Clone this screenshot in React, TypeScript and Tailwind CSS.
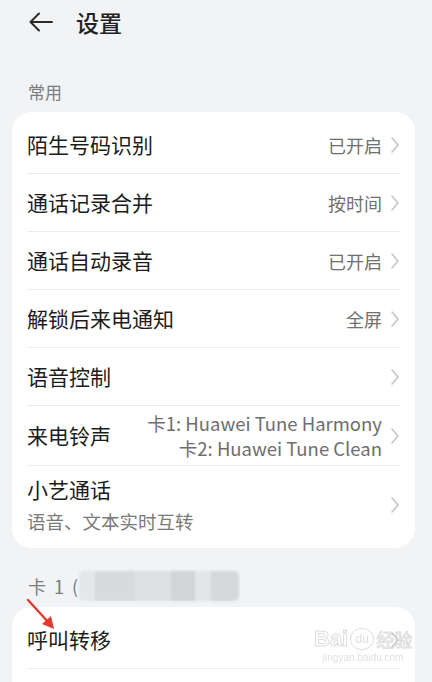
import React from "react";

const Chevron = () => (
  <svg width="10" height="18" viewBox="0 0 10 18" className="shrink-0">
    <path d="M2 2 L8 9 L2 16" fill="none" stroke="#c4c6c8" strokeWidth="1.6" strokeLinecap="round" strokeLinejoin="round" />
  </svg>
);

type Row = { title: string; value?: string; lines?: string[]; sub?: string };

const rows: Row[] = [
  { title: "陌生号码识别", value: "已开启" },
  { title: "通话记录合并", value: "按时间" },
  { title: "通话自动录音", value: "已开启" },
  { title: "解锁后来电通知", value: "全屏" },
  { title: "语音控制" },
  { title: "来电铃声", lines: ["卡1: Huawei Tune Harmony", "卡2: Huawei Tune Clean"] },
  { title: "小艺通话", sub: "语音、文本实时互转" },
];

export default function App() {
  return (
    <div
      className="w-[432px] h-[682px] overflow-hidden bg-[#f1f3f5] relative"
      style={{ fontFamily: '"Noto Sans CJK SC", "Noto Sans", sans-serif' }}
    >
      {/* Header */}
      <div className="h-[44px] flex items-center pl-[28px]">
        <svg width="26" height="22" viewBox="0 0 26 22">
          <path d="M24 11 H3 M11 2.5 L2.5 11 L11 19.5" fill="none" stroke="#2a2a2a" strokeWidth="2" strokeLinecap="round" strokeLinejoin="round" />
        </svg>
        <span className="ml-[22px] text-[23px] font-medium text-[#222] leading-none">设置</span>
      </div>

      {/* Section label */}
      <div className="h-[68px] flex items-end pb-[12px] pl-[28px]">
        <span className="text-[17px] text-[#7a7c7e] leading-none">常用</span>
      </div>

      {/* Card */}
      <div className="mx-[12px] w-[403px] bg-white rounded-[20px] py-[4px]">
        {rows.map((r, i) => {
          const last = i === rows.length - 1;
          const h = r.lines ? "h-[60px]" : r.sub ? "h-[78px]" : "h-[58px]";
          return (
            <div key={i} className={`${h} ml-[15px] mr-[15px] flex items-center ${last ? "" : "border-b border-[#ebebeb]"}`}>
              <div className="flex-1 flex flex-col justify-center">
                <span className="text-[21px] text-[#1c1c1c] leading-none">{r.title}</span>
                {r.sub && <span className="mt-[12px] text-[18.5px] text-[#7a7a7a] leading-none">{r.sub}</span>}
              </div>
              {r.value && <span className="text-[18px] text-[#707070] leading-none mr-[8px]">{r.value}</span>}
              {r.lines && (
                <div className="flex flex-col items-end mr-[8px] gap-[7px]">
                  {r.lines.map((l) => (
                    <span key={l} className="text-[18.5px] text-[#6e6e6e] leading-none">{l}</span>
                  ))}
                </div>
              )}
              {!r.value && !r.lines && <span className="mr-[8px]" />}
              <Chevron />
            </div>
          );
        })}
      </div>

      {/* Section 2 label */}
      <div className="h-[59px] flex items-center pl-[28px] pt-[16px]">
        <span className="text-[18px] text-[#7a7c7e] leading-none whitespace-pre tracking-[2px]">卡 1 (</span>
        <div className="ml-[-1px] w-[160px] h-[30px] rounded-[6px] bg-[#dcdee0] flex overflow-hidden blur-[1px]">
          <div className="w-[16px] bg-[#e6e7e8]" />
          <div className="w-[40px] bg-[#d8dadc]" />
          <div className="w-[36px] bg-[#dfe0e2]" />
          <div className="w-[24px] bg-[#d2d4d6]" />
          <div className="w-[16px] bg-[#e4e5e6]" />
          <div className="flex-1 bg-[#d6d8da]" />
        </div>
      </div>

      {/* Card 2 */}
      <div className="mx-[12px] w-[403px] bg-white rounded-t-[20px] pt-[4px]">
        <div className="h-[58px] mx-[15px] flex items-center border-b border-[#ebebeb]">
          <span className="flex-1 text-[21px] text-[#1c1c1c] leading-none">呼叫转移</span>
          <Chevron />
        </div>
        <div className="h-[30px]" />
      </div>

      {/* Red annotation arrow */}
      <svg className="absolute left-[24px] top-[595px]" width="36" height="38" viewBox="0 0 36 38">
        <path d="M4 5 L25 28" stroke="#e33a2f" strokeWidth="2.4" strokeLinecap="round" />
        <path d="M30 34 L18 29 L27 21 Z" fill="#e33a2f" />
      </svg>

      {/* Baidu watermark */}
      <div className="absolute left-[314px] top-[628px] flex flex-col items-center opacity-70 pointer-events-none">
        <div className="flex items-center leading-none">
          <span className="text-[22px] font-bold text-white" style={{ fontFamily: '"Liberation Sans", sans-serif', WebkitTextStroke: "1px #d0d0d0" }}>Bai</span>
          <span className="mx-[2px] w-[24px] h-[22px] rounded-full border border-[#d0d0d0] text-[12px] text-[#d0d0d0] flex items-center justify-center" style={{ fontFamily: '"Liberation Sans", sans-serif' }}>du</span>
          <span className="text-[18px] text-white" style={{ WebkitTextStroke: "1px #d0d0d0" }}>经验</span>
        </div>
        <span className="text-[10px] text-[#d4d4d4] leading-none mt-[3px]" style={{ fontFamily: '"Liberation Sans", sans-serif' }}>jingyan.baidu.com</span>
      </div>
    </div>
  );
}
